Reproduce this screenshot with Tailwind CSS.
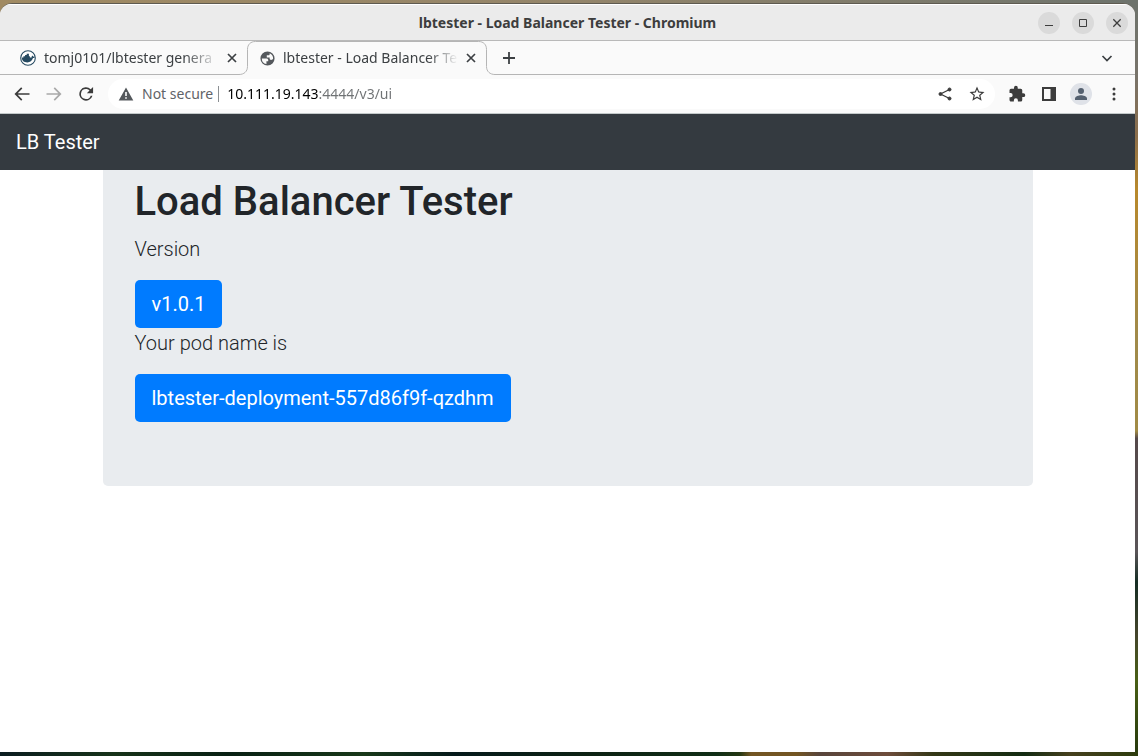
<!DOCTYPE html>
<html lang="en">
<head>
<meta charset="utf-8">
<title>lbtester - Load Balancer Tester</title>
<script src="https://cdn.jsdelivr.net/npm/@tailwindcss/browser@4"></script>
</head>
<body class="relative flex min-h-screen flex-col bg-[#0d2013] pt-[3px] pr-[3px] pb-1 font-['Roboto',sans-serif] text-[#212529]">
<!-- desktop wallpaper edges -->
<div class="absolute inset-x-0 top-0 h-4 bg-linear-to-r from-[#a08a62] via-[#94856a] to-[#6d736c]"></div>
<div class="absolute inset-y-0 right-0 w-4 bg-[linear-gradient(#6d736c_0%,#78736a_10%,#8b6d4a_18%,#b8892c_25%,#a08a4a_45%,#a18b45_57%,#55494a_58%,#5a5558_73%,#152d24_77%,#45452b_84%,#496015_90%,#25380c_100%)]"></div>
<div class="absolute inset-x-0 bottom-0 h-1 bg-[linear-gradient(90deg,#0b1d20_0%,#173319_10%,#082013_20%,#183819_32%,#051a1b_40%,#0d2213_52%,#102e16_63%,#243712_65%,#735522_66%,#735522_70%,#58453b_72%,#6e4c3b_78%,#343816_82%,#132b12_90%,#46401d_94%,#2d3c0d_100%)]"></div>

<div class="relative flex flex-1 flex-col overflow-hidden rounded-t-xl border-t border-[#5e5a50] bg-white">
  <header class="grid h-[37px] grid-cols-[1fr_auto_1fr] items-center border-t border-b border-t-white border-b-[#b9b9b9] bg-[#ebebeb] px-[7px] text-[#3d3d3d]">
    <span></span>
    <h1 class="font-['Noto_Sans',sans-serif] text-sm leading-5 font-bold">lbtester - Load Balancer Tester - Chromium</h1>
    <div class="flex justify-end gap-3">
      <button aria-label="Minimize" class="size-[22px] rounded-full bg-[#dadada]"><svg viewBox="0 0 22 22" class="size-full" fill="none" stroke="#3d3d3d"><path d="M7 13.500h8"/></svg></button>
      <button aria-label="Maximize" class="size-[22px] rounded-full bg-[#dadada]"><svg viewBox="0 0 22 22" class="size-full" fill="none" stroke="#3d3d3d"><path d="M7.500 7.500h7v7h-7z"/></svg></button>
      <button aria-label="Close window" class="size-[22px] rounded-full bg-[#dadada]"><svg viewBox="0 0 22 22" class="size-full" fill="none" stroke="#3d3d3d" stroke-width="1.300"><path d="M7.300 7.300l7.400 7.400M14.700 7.300l-7.400 7.400"/></svg></button>
    </div>
  </header>

  <nav aria-label="Tabs" class="flex h-[34px] bg-[#fafafa] font-['Noto_Sans',sans-serif] text-sm text-[#3c4043]">
    <div class="flex w-[239px] items-center border-b border-[#b5b5b5] pl-5">
      <svg viewBox="0 0 16 16" class="mr-2 size-4 shrink-0"><circle cx="8" cy="8" r="7.300" fill="#fff" stroke="#264a61" stroke-width="1.100"/><path fill="#264a61" d="M1.800 7.600h1.600V6.200h1.700V5h1.600V3.700h2.200v2.500h1V7.500h1.200c.6 0 .8-.5.6-1.300l.5-.8c.6.400.9.800.9 1.300.6-.2 1.200-.1 1.700.2-.3.900-1 1.200-1.800 1.200-.9 2.800-2.800 4.300-5.700 4.300-3.400 0-5.400-1.300-5.500-4.800z"/></svg>
      <button class="w-[175px] overflow-hidden text-left whitespace-nowrap mask-[linear-gradient(90deg,#000_140px,transparent)]">tomj0101/lbtester genera</button>
      <button aria-label="Close tab" class="ml-[7px]"><svg viewBox="0 0 12 12" class="size-3" stroke="#3c4043" stroke-width="1.700"><path d="M2 2l8 8M10 2l-8 8"/></svg></button>
    </div>
    <div class="relative flex w-[256px] items-center pl-5">
      <svg viewBox="0 0 256 34" class="absolute inset-0 h-full w-full" fill="none" stroke="#b5b5b5"><path d="M0 33.500c5 0 8.500-3 8.500-8V8.500c0-5 3-8 8-8h223c5 0 8 3 8 8v17c0 5 3.500 8 8.500 8"/></svg>
      <svg viewBox="0 0 24 24" class="relative mr-[7px] size-[17px] shrink-0" fill="#54585c"><path d="M12 2a10 10 0 1 0 0 20 10 10 0 0 0 0-20zm-1.500 17.900A8 8 0 0 1 4 12h6.500c1.500 0 2.500 1 2.500 2v2h-2.500zM19.900 12.500c-.5 1.200-1.500 1.500-2.900 1.500-1 0-2-1-2-2v-1.500h-4V7.500h2.500c1 0 1.500-.7 1.500-1.500V4.700a8 8 0 0 1 4.900 7.800z"/></svg>
      <button class="relative w-[175px] overflow-hidden text-left whitespace-nowrap mask-[linear-gradient(90deg,#000_145px,transparent)]">lbtester - Load Balancer Te</button>
      <button aria-label="Close tab" class="relative ml-[7px]"><svg viewBox="0 0 12 12" class="size-3" stroke="#3c4043" stroke-width="1.700"><path d="M2 2l8 8M10 2l-8 8"/></svg></button>
    </div>
    <div class="flex flex-1 items-center justify-between border-b border-[#b5b5b5] pr-[22px] pl-2">
      <button aria-label="New tab"><svg viewBox="0 0 12 12" class="size-3" stroke="#3c4043" stroke-width="1.800"><path d="M6 0v12M0 6h12"/></svg></button>
      <button aria-label="Search tabs"><svg viewBox="0 0 12 12" class="size-3" fill="none" stroke="#3c4043" stroke-width="1.700"><path d="M1.500 4L6 8.500 10.500 4"/></svg></button>
    </div>
  </nav>

  <div class="flex h-[39px] items-center border-b border-[#c3c9ca] bg-[#fafafa] px-3 text-[#3c4043]">
    <button aria-label="Back" class="mr-3"><svg viewBox="0 0 24 24" class="size-5" fill="#3c3c3c"><path d="M21 11H6.830l5.590-5.590L11 4l-8 8 8 8 1.410-1.410L6.830 13H21z"/></svg></button>
    <button aria-label="Forward" class="mr-3"><svg viewBox="0 0 24 24" class="size-5" fill="#a9a9a9"><path d="M3 13h14.170l-5.590 5.590L13 20l8-8-8-8-1.410 1.410L17.170 11H3z"/></svg></button>
    <button aria-label="Reload" class="mr-3"><svg viewBox="0 0 24 24" class="size-5" fill="#3c3c3c"><path d="M17.650 6.350A8 8 0 1 0 19.730 14h-2.080A6 6 0 1 1 12 6c1.660 0 3.140.69 4.220 1.780L13 11h7.500V3.500z"/></svg></button>
    <form class="flex h-[30px] min-w-0 flex-1 items-center rounded-full bg-white pr-[9px] pl-[10px] font-['Noto_Sans',sans-serif] text-sm">
      <svg viewBox="0 0 16 16" class="mr-2 size-4" fill="#54585c"><path d="M8 1.500L.7 14.500h14.600zM7.200 6h1.600v4H7.200zm0 5.200h1.600v1.600H7.200z" fill-rule="evenodd"/></svg>
      <button type="button" class="text-left whitespace-nowrap text-[#5f6368]">Not secure</button>
      <span class="mr-2 ml-[5px] h-4 w-px bg-[#8b8f93]"></span>
      <input aria-label="Address" value="10.111.19.143:4444/v3/ui" class="min-w-0 flex-1 bg-[linear-gradient(90deg,#000_92px,#6f7274_92px)] bg-clip-text text-transparent caret-black outline-none">
      <button type="button" aria-label="Share" class="mr-[15px]"><svg viewBox="0 0 16 16" class="size-4" fill="#3c3c3c" stroke="#3c3c3c"><path d="M12.500 3.500L3.500 8l9 4.500" fill="none" stroke-width="1.300"/><circle cx="12.500" cy="3.500" r="1.500"/><circle cx="3.500" cy="8" r="1.500"/><circle cx="12.500" cy="12.500" r="1.500"/></svg></button>
      <button type="button" aria-label="Bookmark this tab"><svg viewBox="0 0 24 24" class="size-[18px]" fill="#3c3c3c"><path d="M22 9.240l-7.190-.62L12 2 9.190 8.630 2 9.240l5.460 4.730L5.820 21 12 17.270 18.180 21l-1.630-7.030zM12 15.400l-3.760 2.270 1-4.280-3.320-2.880 4.380-.38L12 6.100l1.710 4.040 4.380.38-3.320 2.880 1 4.280z"/></svg></button>
    </form>
    <button aria-label="Extensions" class="ml-[13px]"><svg viewBox="0 0 24 24" class="size-[18px]" fill="#3c3c3c"><path d="M20.500 11H19V7a2 2 0 0 0-2-2h-4V3.500a2.500 2.500 0 0 0-5 0V5H4a2 2 0 0 0-2 2v3.800h1.500a2.700 2.700 0 0 1 0 5.400H2V20c0 1.100.9 2 2 2h3.800v-1.500a2.700 2.700 0 0 1 5.400 0V22H17a2 2 0 0 0 2-2v-4h1.500a2.500 2.500 0 0 0 0-5z"/></svg></button>
    <button aria-label="Side panel" class="ml-4"><svg viewBox="0 0 14 14" class="size-[14px]"><path fill="#3c3c3c" fill-rule="evenodd" d="M0 0h14v14H0zM2 2v10h6.500V2z"/></svg></button>
    <button aria-label="Profile" class="ml-[14px]"><svg viewBox="0 0 22 22" class="size-[22px]"><circle cx="11" cy="11" r="11" fill="#dfe2e8"/><g fill="#54606f"><circle cx="11" cy="8" r="3"/><path d="M5 17v-1.500c0-2 4-3.200 6-3.200s6 1.200 6 3.200V17z"/></g></svg></button>
    <button aria-label="Menu" class="ml-[13px]"><svg viewBox="0 0 18 18" class="size-[18px]" fill="#3c3c3c"><circle cx="9" cy="4" r="1.500"/><circle cx="9" cy="9" r="1.500"/><circle cx="9" cy="14" r="1.500"/></svg></button>
  </div>

  <nav aria-label="Site" class="bg-[#343a40] px-4 py-[13px]"><a href="#" class="text-xl leading-[30px] text-white">LB Tester</a></nav>
  <main class="mx-auto w-full max-w-[930px] rounded-b-[5px] bg-[#e9ecef] px-8 pt-2 pb-16">
    <h2 class="mb-2 text-[40px] leading-[48px] font-medium">Load Balancer Tester</h2>
    <p class="mb-4 text-xl leading-[30px] font-light">Version</p>
    <button class="block h-12 rounded-[5px] bg-[#007bff] px-[17px] text-xl text-white">v1.0.1</button>
    <p class="mb-4 text-xl leading-[30px] font-light">Your pod name is</p>
    <button class="block h-12 rounded-[5px] bg-[#007bff] px-[17px] text-xl text-white">lbtester-deployment-557d86f9f-qzdhm</button>
  </main>
</div>
</body>
</html>
